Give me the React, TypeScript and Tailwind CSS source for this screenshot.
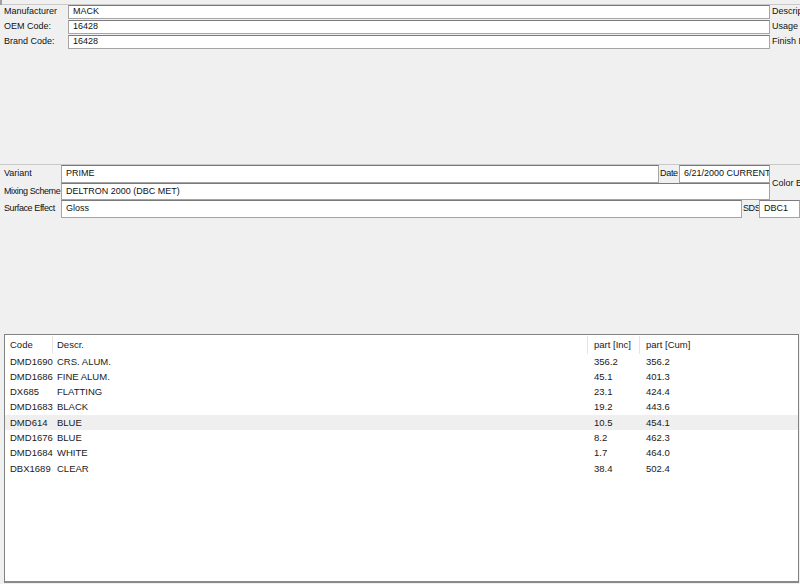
import React from 'react';

const rows = [
  { code: 'DMD1690', descr: 'CRS. ALUM.', inc: '356.2', cum: '356.2' },
  { code: 'DMD1686', descr: 'FINE ALUM.', inc: '45.1', cum: '401.3' },
  { code: 'DX685', descr: 'FLATTING', inc: '23.1', cum: '424.4' },
  { code: 'DMD1683', descr: 'BLACK', inc: '19.2', cum: '443.6' },
  { code: 'DMD614', descr: 'BLUE', inc: '10.5', cum: '454.1', hl: true },
  { code: 'DMD1676', descr: 'BLUE', inc: '8.2', cum: '462.3' },
  { code: 'DMD1684', descr: 'WHITE', inc: '1.7', cum: '464.0' },
  { code: 'DBX1689', descr: 'CLEAR', inc: '38.4', cum: '502.4' },
];

const Field: React.FC<{ value?: string; className?: string }> = ({ value = '', className = '' }) => (
  <div className={`shrink-0 bg-white border border-[#a5a5a5] border-t-[#7a7a7a] flex items-center pl-[4px] whitespace-nowrap overflow-hidden ${className}`}>
    {value}
  </div>
);

export default function App() {
  return (
    <div
      className="w-[800px] h-[584px] bg-[#f0f0f0] overflow-hidden text-[9px] text-[#111] relative"
      style={{ fontFamily: '"Liberation Sans", Arial, sans-serif' }}
    >
      <div className="absolute left-0 top-0 w-[2px] h-[5px] bg-[#a0a0a0]" />

      {/* top section */}
      <div className="mt-[4px] border-t border-[#c8c8c8] h-[160px] flex flex-col gap-[1px]">
        {[
          ['Manufacturer', 'MACK', 'Descrip'],
          ['OEM Code:', '16428', 'Usage'],
          ['Brand Code:', '16428', 'Finish E'],
        ].map(([label, value, right]) => (
          <div key={label} className="flex h-[14px] items-center">
            <div className="w-[68px] shrink-0 pl-[4px] whitespace-nowrap">{label}</div>
            <Field value={value} className="w-[702px] h-[14px]" />
            <div className="pl-[2px] whitespace-nowrap">{right}</div>
          </div>
        ))}
      </div>

      {/* second section */}
      <div className="border-t border-[#c8c8c8] h-[170px] flex flex-col">
        <div className="flex">
          <div className="flex flex-col shrink-0">
            <div className="flex h-[18px] items-center">
              <div className="w-[61px] shrink-0 pl-[4px] whitespace-nowrap">Variant</div>
              <Field value="PRIME" className="w-[598px] h-[18px]" />
              <div className="w-[20px] shrink-0 pl-[1px] tracking-[-0.3px]">Date</div>
              <Field value="6/21/2000 CURRENT" className="w-[91px] h-[18px]" />
            </div>
            <div className="flex h-[17px] items-center">
              <div className="w-[61px] shrink-0 pl-[4px] whitespace-nowrap tracking-[-0.4px]">Mixing Scheme</div>
              <Field value="DELTRON 2000 (DBC MET)" className="w-[709px] h-[17px]" />
            </div>
          </div>
          <div className="flex items-center pl-[2px] pt-[2px] whitespace-nowrap">Color Bo</div>
        </div>
        <div className="flex h-[18px] items-center">
          <div className="w-[61px] shrink-0 pl-[4px] whitespace-nowrap tracking-[-0.4px]">Surface Effect</div>
          <Field value="Gloss" className="w-[681px] h-[18px]" />
          <div className="w-[17px] shrink-0 pl-[1px] tracking-[-0.4px]">SDS</div>
          <Field value="DBC1" className="flex-1 h-[18px]" />
        </div>
      </div>

      {/* table */}
      <div className="ml-[4px] mr-[1px] h-[249px] bg-white border border-[#828282] border-b-2 border-b-[#8a8a8a] text-[9.5px] text-[#1a1a1a]">
        <div className="flex h-[19px] items-center whitespace-nowrap pt-[1px]">
          <div className="w-[48px] shrink-0 pl-[5px] border-r border-[#e5e5e5] h-full flex items-center">Code</div>
          <div className="w-[535px] shrink-0 pl-[4px] border-r border-[#e5e5e5] h-full flex items-center">Descr.</div>
          <div className="w-[52px] shrink-0 pl-[6px] border-r border-[#e5e5e5] h-full flex items-center">part [Inc]</div>
          <div className="pl-[6px] h-full flex items-center">part [Cum]</div>
        </div>
        <div>
          {rows.map((r) => (
            <div key={r.code + r.cum} className={`flex h-[15.3px] items-center whitespace-nowrap ${r.hl ? 'bg-[#efefef]' : ''}`}>
              <div className="w-[48px] shrink-0 pl-[5px]">{r.code}</div>
              <div className="w-[535px] shrink-0 pl-[4px]">{r.descr}</div>
              <div className="w-[52px] shrink-0 pl-[6px]">{r.inc}</div>
              <div className="pl-[6px]">{r.cum}</div>
            </div>
          ))}
        </div>
      </div>
    </div>
  );
}
